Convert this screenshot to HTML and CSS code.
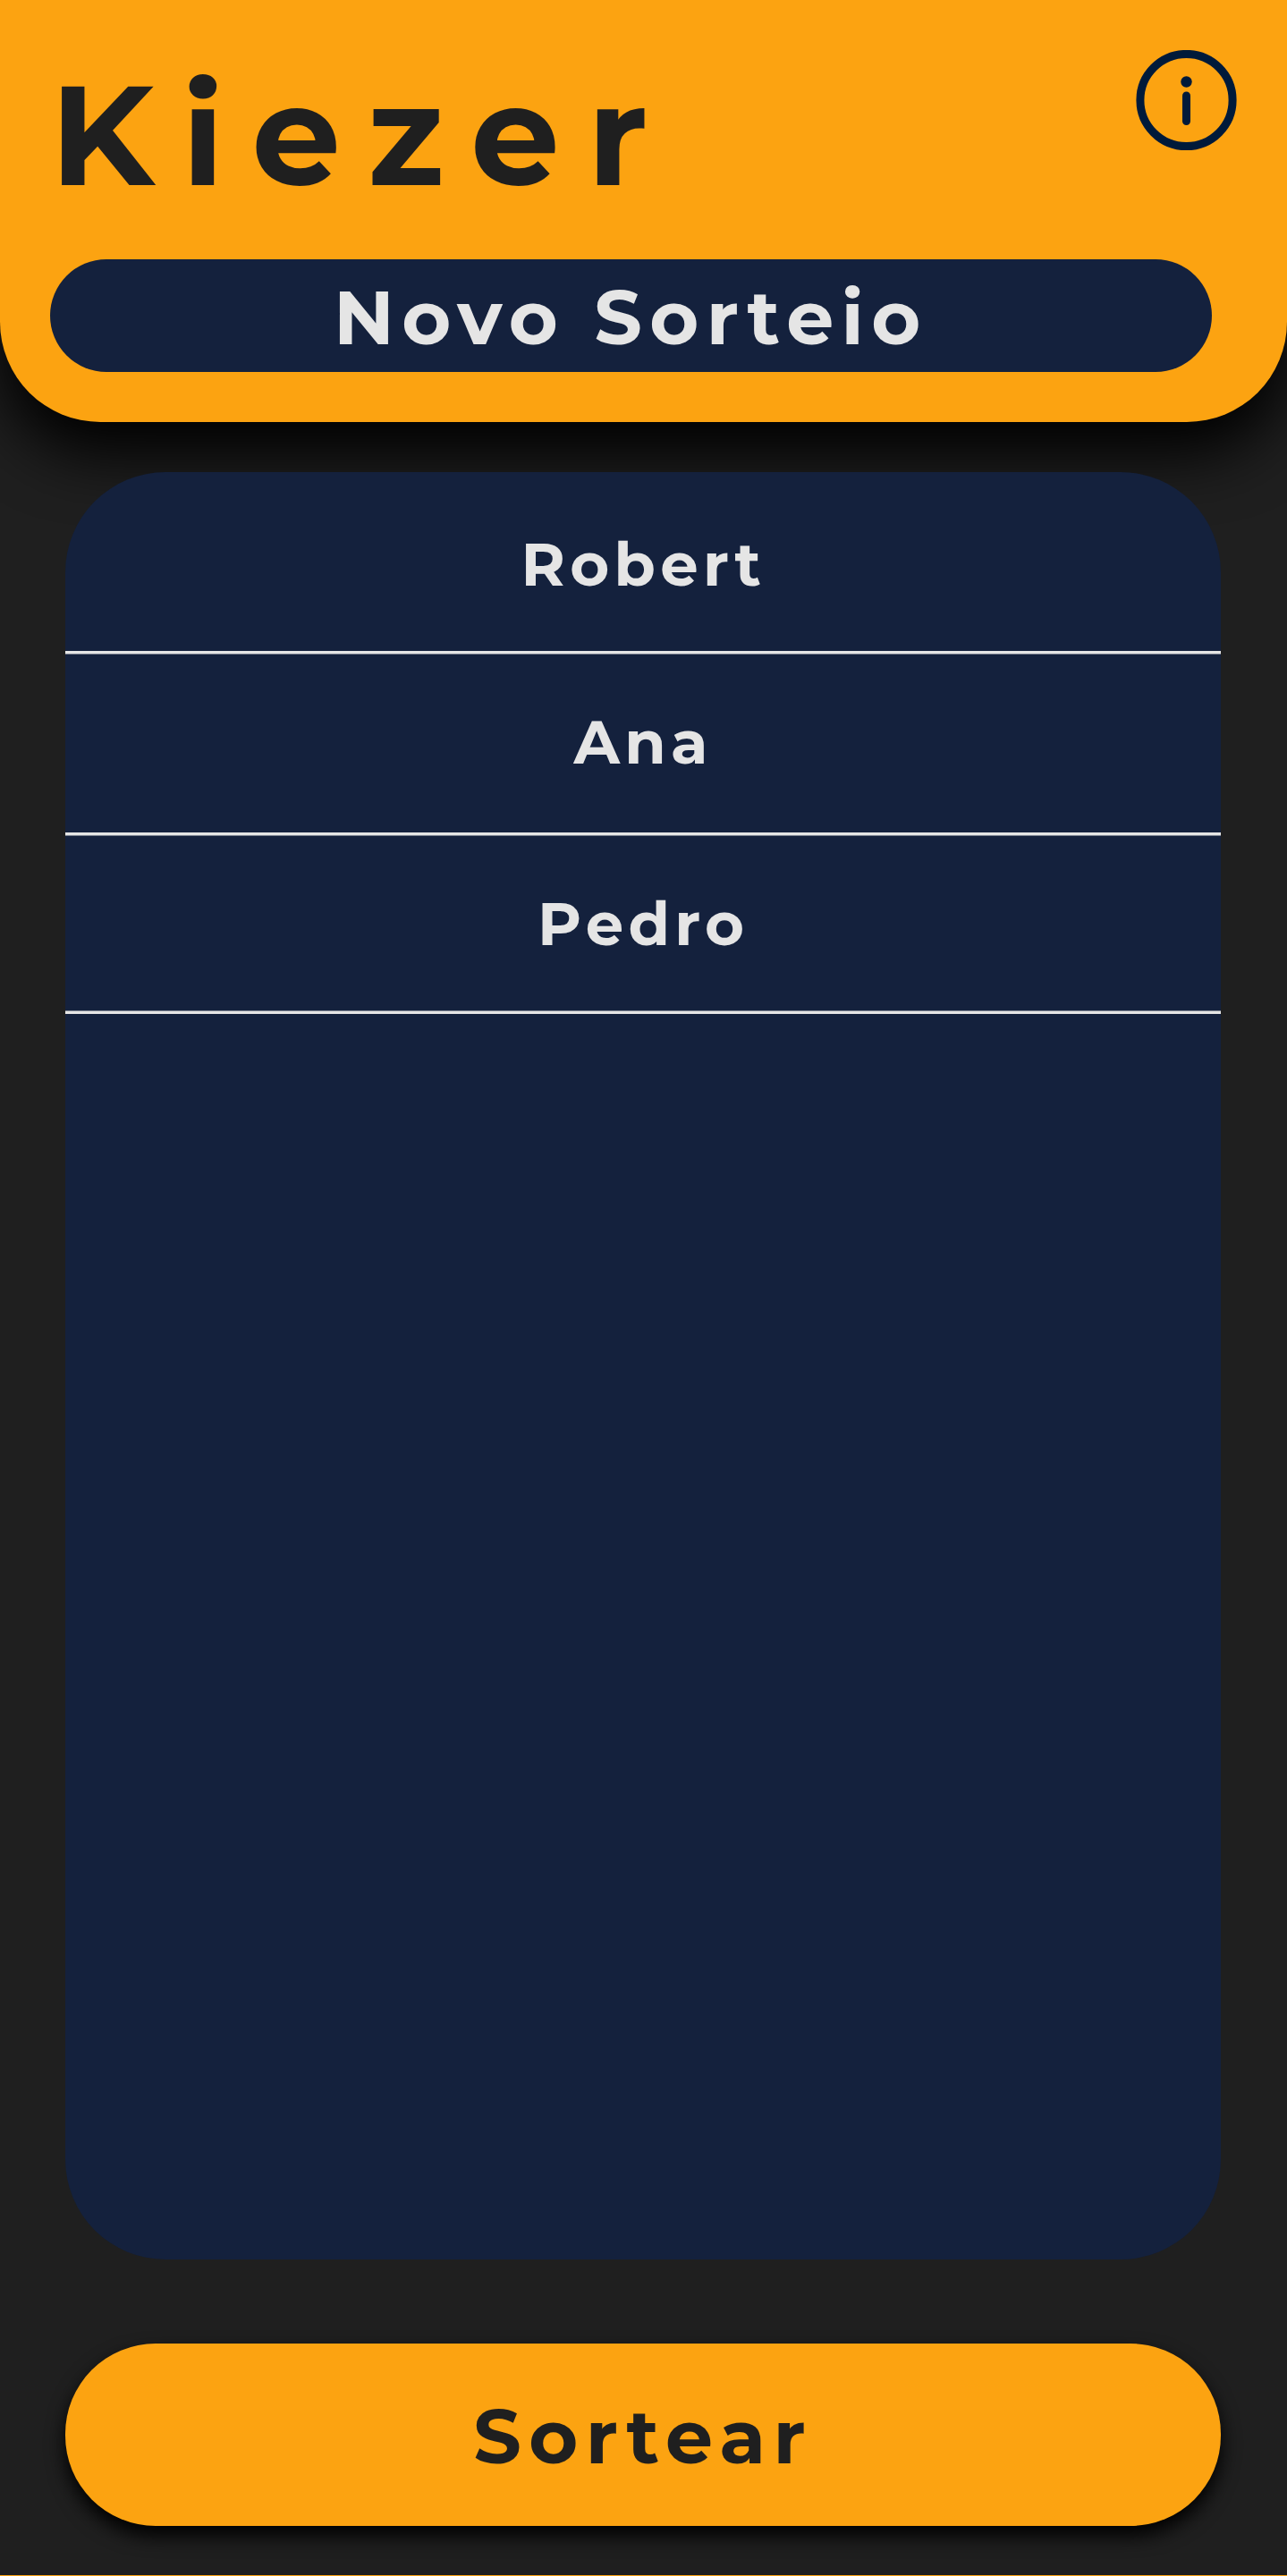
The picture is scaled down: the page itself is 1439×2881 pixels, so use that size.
FILE: index.html
```html
<!DOCTYPE html>
<html lang="pt-BR">
<head>
<meta charset="utf-8">
<title>Kiezer</title>
<link rel="stylesheet" href="styles.css">
</head>
<body>
<div class="app">
  <header class="header">
    <div class="top">
      <h1 class="brand">Kiezer</h1>
      <svg class="info" viewBox="0 0 113 113" aria-label="Info">
        <circle class="ring" cx="56.5" cy="56" r="51.6"/>
        <circle class="ink" cx="56.5" cy="35.5" r="6.2"/>
        <rect class="ink" x="52" y="46.5" width="9" height="37.5" rx="4.5"/>
      </svg>
    </div>
    <button class="new">Novo Sorteio</button>
  </header>
  <ul class="list">
    <li class="row row-a">Robert</li>
    <li class="row row-b">Ana</li>
    <li class="row row-c">Pedro</li>
  </ul>
  <button class="draw">Sortear</button>
  <div class="edge"></div>
</div>
</body>
</html>
```
FILE: styles.css
```css
* { box-sizing: border-box; }
body {
  margin: 0;
  background: #1f1f1f;
  font-family: Montserrat, Inter, "Open Sans", sans-serif;
  font-weight: 700;
}
.app {
  width: 1439px;
  height: 2881px;
  display: flex;
  flex-direction: column;
  overflow: hidden;
}
.header {
  height: 472.4px;
  flex: none;
  padding: 56px 56px 0;
  background: #fca311;
  border-radius: 0 0 112px 112px;
  box-shadow: 0 35px 70px #000;
}
.top {
  height: 234.4px;
  display: flex;
  justify-content: space-between;
  align-items: flex-start;
}
.brand {
  margin: 0;
  font-size: 157.5px;
  font-weight: inherit;
  line-height: 191px;
  letter-spacing: 30.8px;
  color: #1f1f1f;
}
.info { width: 113px; height: 113px; flex: none; }
.ring { fill: none; stroke: #001a3a; stroke-width: 9; }
.ink { fill: #001a3a; }
.new, .draw {
  display: flex;
  align-items: center;
  justify-content: center;
  border: 0;
  font: inherit;
  font-size: 84px;
  letter-spacing: 0.1em;
}
.new {
  width: 1298.6px;
  height: 126px;
  padding: 3px 0 0;
  border-radius: 63px;
  background: #14213d;
  color: #e5e5e5;
}
.list {
  flex: none;
  width: 1291.6px;
  height: 1998.4px;
  margin: 56px 0 0 73.4px;
  padding: 0;
  list-style: none;
  background: #14213d;
  border-radius: 112px;
  position: relative;
}
.row {
  display: flex;
  align-items: center;
  justify-content: center;
  border-bottom: 3px solid #e5e5e5;
  box-shadow: 0 1px #7d8391;
  color: #e5e5e5;
  font-size: 67.2px;
  letter-spacing: 0.08em;
}
.row-a { height: 202.6px; padding-top: 5.4px; }
.row-b { height: 203px; padding-bottom: 2px; }
.row-c { height: 200px; padding-top: 1px; box-shadow: inset 0 -1px #7d8391; }
.draw {
  flex: none;
  width: 1291.6px;
  height: 203.4px;
  margin: 94.6px 0 0 73.4px;
  padding: 3.6px 0 0;
  border-radius: 101px;
  background: #fca311;
  color: #1f1f1f;
  box-shadow: 0 11px 21px #000;
}
.edge { margin-top: auto; height: 1px; background: #fca311; }
```
